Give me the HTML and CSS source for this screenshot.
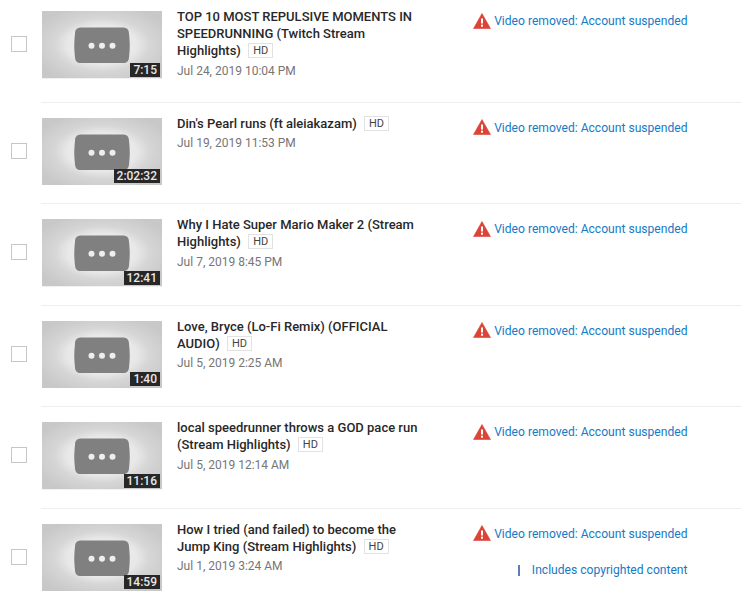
FILE: index.html
```html
<!DOCTYPE html>
<html lang="en">
<head>
<meta charset="utf-8">
<title>Videos</title>
<link rel="stylesheet" href="styles.css">
</head>
<body>
<svg class="defs" width="0" height="0" aria-hidden="true">
  <defs>
    <radialGradient id="glow" cx="50%" cy="50%" r="60%">
      <stop offset="0" stop-color="#eeeeee"/>
      <stop offset="0.48" stop-color="#e8e8e8"/>
      <stop offset="0.66" stop-color="#d6d6d6"/>
      <stop offset="1" stop-color="#c8c8c8"/>
    </radialGradient>
    <symbol id="thumb" viewBox="0 0 120 68" preserveAspectRatio="none">
      <rect width="120" height="68" fill="url(#glow)"/>
      <path d="M40 16.500h40c4.500 0 7 1.500 7 6.500 1 10 1 14 0 24-.5 4-2.500 5.500-7 5.500H40c-4.500 0-6.500-1.500-7-5.500-1-10-1-14 0-24 0-5 2.500-6.500 7-6.500z" fill="#808080"/>
      <circle cx="49.500" cy="35" r="3" fill="#eeeeee"/>
      <circle cx="60" cy="35" r="3" fill="#eeeeee"/>
      <circle cx="70.500" cy="35" r="3" fill="#eeeeee"/>
    </symbol>
    <symbol id="warn" viewBox="0 0 18 16">
      <path d="M9 0.500 17.500 15.500H0.500z" fill="#db4437" stroke="#db4437" stroke-linejoin="round" stroke-width=".6"/>
      <rect x="8" y="5.500" width="2" height="5" fill="#fff"/>
      <rect x="8" y="11.700" width="2" height="2" fill="#fff"/>
    </symbol>
  </defs>
</svg>
<main class="list">
  <article class="row row-first">
    <span class="check"></span>
    <div class="thumb"><svg class="thumb-art"><use href="#thumb"/></svg><span class="time">7:15</span></div>
    <div class="info">
      <h3 class="title">TOP 10 MOST REPULSIVE MOMENTS IN SPEEDRUNNING (Twitch Stream Highlights) <span class="hd">HD</span></h3>
      <p class="date">Jul 24, 2019 10:04 PM</p>
    </div>
    <div class="status"><div class="notice"><svg class="warn"><use href="#warn"/></svg><a class="notice-link">Video removed: Account suspended</a></div></div>
  </article>
  <article class="row">
    <span class="check"></span>
    <div class="thumb"><svg class="thumb-art"><use href="#thumb"/></svg><span class="time">2:02:32</span></div>
    <div class="info">
      <h3 class="title">Din's Pearl runs (ft aleiakazam) <span class="hd">HD</span></h3>
      <p class="date">Jul 19, 2019 11:53 PM</p>
    </div>
    <div class="status"><div class="notice"><svg class="warn"><use href="#warn"/></svg><a class="notice-link">Video removed: Account suspended</a></div></div>
  </article>
  <article class="row">
    <span class="check"></span>
    <div class="thumb"><svg class="thumb-art"><use href="#thumb"/></svg><span class="time">12:41</span></div>
    <div class="info">
      <h3 class="title">Why I Hate Super Mario Maker 2 (Stream Highlights) <span class="hd">HD</span></h3>
      <p class="date">Jul 7, 2019 8:45 PM</p>
    </div>
    <div class="status"><div class="notice"><svg class="warn"><use href="#warn"/></svg><a class="notice-link">Video removed: Account suspended</a></div></div>
  </article>
  <article class="row">
    <span class="check"></span>
    <div class="thumb"><svg class="thumb-art"><use href="#thumb"/></svg><span class="time">1:40</span></div>
    <div class="info">
      <h3 class="title">Love, Bryce (Lo-Fi Remix) (OFFICIAL AUDIO) <span class="hd">HD</span></h3>
      <p class="date">Jul 5, 2019 2:25 AM</p>
    </div>
    <div class="status"><div class="notice"><svg class="warn"><use href="#warn"/></svg><a class="notice-link">Video removed: Account suspended</a></div></div>
  </article>
  <article class="row">
    <span class="check"></span>
    <div class="thumb"><svg class="thumb-art"><use href="#thumb"/></svg><span class="time">11:16</span></div>
    <div class="info">
      <h3 class="title">local speedrunner throws a GOD pace run (Stream Highlights) <span class="hd">HD</span></h3>
      <p class="date">Jul 5, 2019 12:14 AM</p>
    </div>
    <div class="status"><div class="notice"><svg class="warn"><use href="#warn"/></svg><a class="notice-link">Video removed: Account suspended</a></div></div>
  </article>
  <article class="row">
    <span class="check"></span>
    <div class="thumb"><svg class="thumb-art"><use href="#thumb"/></svg><span class="time">14:59</span></div>
    <div class="info">
      <h3 class="title">How I tried (and failed) to become the Jump King (Stream Highlights) <span class="hd">HD</span></h3>
      <p class="date">Jul 1, 2019 3:24 AM</p>
    </div>
    <div class="status">
      <div class="notice"><svg class="warn"><use href="#warn"/></svg><a class="notice-link">Video removed: Account suspended</a></div>
      <div class="claim"><a>Includes copyrighted content</a></div>
    </div>
  </article>
</main>
</body>
</html>
```
FILE: styles.css
```css
* { box-sizing: border-box; }
html, body { margin: 0; padding: 0; background: #fff; }
body { width: 741px; height: 594px; overflow: hidden; font-family: Roboto, "Liberation Sans", sans-serif; }
.defs { position: absolute; }
.list { padding-left: 41px; }
.row {
  position: relative;
  display: flex;
  align-items: flex-start;
  height: 101.5px;
  padding-top: 15px;
  border-top: 1px solid #eeeeee;
}
.row-first { padding-top: 11px; border-top: 0; }
.check {
  position: absolute;
  left: -30px;
  top: 40px;
  width: 16px;
  height: 16px;
  border: 1px solid #c6c6c6;
  background: #fff;
}
.row-first .check { top: 36px; }
.thumb { position: relative; flex: none; width: 120px; height: 67.5px; margin-left: 1px; }
.thumb-art { display: block; width: 120px; height: 67.5px; }
.time {
  position: absolute;
  right: 2px;
  bottom: 2px;
  height: 14px;
  padding: 0 3px;
  background: #272727;
  color: #e8e8e8;
  font-size: 12px;
  font-weight: 500;
  line-height: 14px;
}
.info { flex: none; width: 255px; margin: -3px 0 0 15px; }
.title {
  margin: 0;
  color: #282828;
  font-size: 13px;
  font-weight: 500;
  line-height: 17px;
}
.hd {
  display: inline-block;
  height: 15px;
  margin-left: 4px;
  padding: 0 4px;
  border: 1px solid #e2e2e2;
  color: #444;
  font-size: 11px;
  font-weight: 400;
  line-height: 13px;
  vertical-align: 1px;
}
.date { margin: 3.5px 0 0; color: #767676; font-size: 12px; line-height: 17px; }
.status { flex: 1; padding-right: 53.5px; color: #167ac6; font-size: 12.1px; line-height: 17px; }
.notice { display: flex; justify-content: flex-end; align-items: center; gap: 3px; }
.notice-link { padding-top: 2px; }
.warn { width: 18px; height: 16px; }
.claim { margin-top: 19px; text-align: right; }
.claim a { display: inline-block; padding-left: 12px; border-left: 2px solid #5d7fb5; line-height: 11px; }
```
